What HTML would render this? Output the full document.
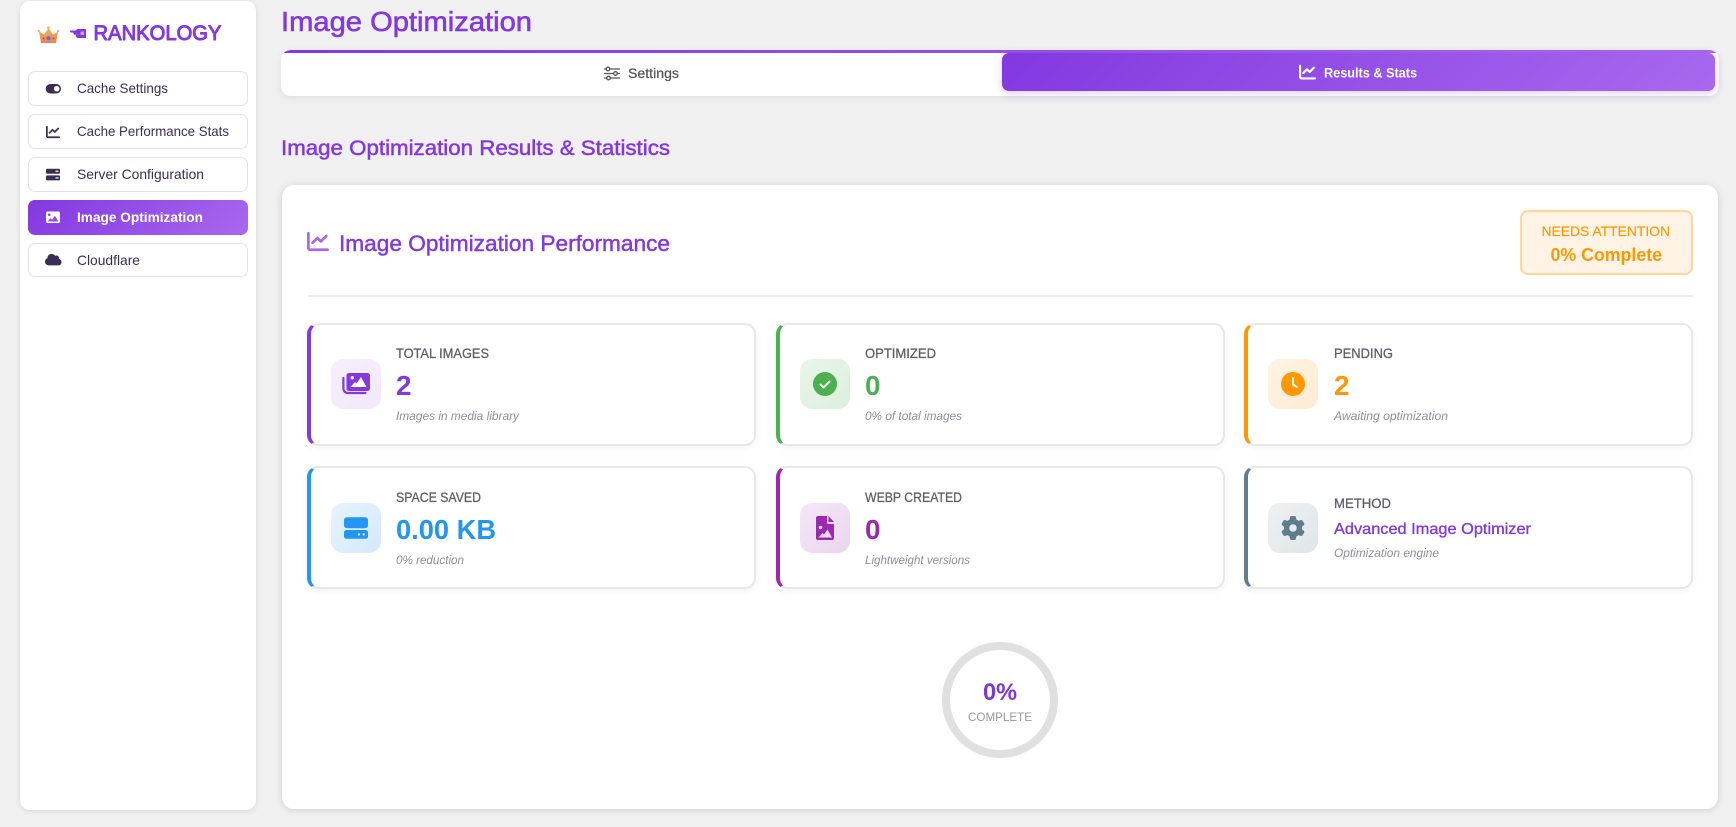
<!DOCTYPE html>
<html lang="en">
<head>
<meta charset="utf-8">
<title>Image Optimization</title>
<style>
html,body{margin:0;padding:0;width:1736px;height:827px;overflow:hidden;background:#f0f0f0;font-family:"Liberation Sans",sans-serif}
.box{position:absolute;box-sizing:border-box}
.side{left:20px;top:1px;width:236px;height:809px;background:#fff;border-radius:10px;box-shadow:0 1px 6px rgba(0,0,0,.1)}
.nav{left:28px;width:220px;background:#fff;border:1.5px solid #e2e2ea;border-radius:7px}
.nav.on{background:linear-gradient(135deg,#8338e0,#a868ee);border:0}
.tabs{left:281px;top:50px;width:1438px;height:46px;background:#fff;border-radius:10px;box-shadow:0 2px 8px rgba(0,0,0,.08);overflow:hidden}
.tabs:before{content:"";position:absolute;left:0;top:0;right:0;height:3px;background:linear-gradient(90deg,#8338e0,#a868ee)}
.tab{left:1002px;top:53px;width:713px;height:38px;background:linear-gradient(135deg,#8338e0,#a868ee);border-radius:7px;box-shadow:0 2px 8px rgba(131,56,224,.25)}
.main{left:282px;top:185px;width:1436px;height:624px;background:#fff;border-radius:12px;box-shadow:0 1px 8px rgba(0,0,0,.14)}
.rule{left:308px;top:295px;width:1385px;height:2px;background:#ececec}
.badge{left:1520px;top:210px;width:173px;height:65px;background:#fff3e6;border:2px solid #ffd699;border-radius:8px}
.card{width:449px;height:123px;background:#fff;border:2px solid #e8e8e8;border-left:4px solid;border-radius:11px;box-shadow:0 2px 8px rgba(0,0,0,.05)}
.ico{width:50px;height:50px;border-radius:12px}
.ring{left:942px;top:642px;width:116px;height:116px;border:8px solid #e0e0e0;border-radius:50%;background:#fff}
svg.layer{position:absolute;left:0;top:0}
text{font-family:"Liberation Sans",sans-serif}
.lab{font-size:13.5px;fill:#5f5f68;stroke:#5f5f68;stroke-width:.3}
.sub{font-size:12px;font-style:italic;fill:#8f8f96}
.val{font-size:28px;font-weight:bold}
.nv{font-size:14px;fill:#3a2e55}
</style>
</head>
<body>
<div class="box side"></div>
<div class="box nav" style="top:71px;height:35px"></div>
<div class="box nav" style="top:114px;height:35px"></div>
<div class="box nav" style="top:157px;height:35px"></div>
<div class="box nav on" style="top:200px;height:35px"></div>
<div class="box nav" style="top:243px;height:34px"></div>

<div class="box tabs"></div>
<div class="box tab"></div>

<div class="box main"></div>
<div class="box badge"></div>
<div class="box rule"></div>

<div class="box card" style="left:307px;top:323px;border-left-color:#8338e0"></div>
<div class="box card" style="left:776px;top:323px;border-left-color:#4caf50"></div>
<div class="box card" style="left:1244px;top:323px;border-left-color:#ff9800"></div>
<div class="box card" style="left:307px;top:466px;border-left-color:#2196f3"></div>
<div class="box card" style="left:776px;top:466px;border-left-color:#9c27b0"></div>
<div class="box card" style="left:1244px;top:466px;border-left-color:#607d8b"></div>

<div class="box ico" style="left:331px;top:359px;background:linear-gradient(135deg,#f5effd,#f1e9fc)"></div>
<div class="box ico" style="left:800px;top:359px;background:linear-gradient(135deg,#e9f5ea,#dcefdd)"></div>
<div class="box ico" style="left:1268px;top:359px;background:linear-gradient(135deg,#fff3e3,#ffebd2)"></div>
<div class="box ico" style="left:331px;top:503px;background:linear-gradient(135deg,#e6f3fe,#d5e9fc)"></div>
<div class="box ico" style="left:800px;top:503px;background:linear-gradient(135deg,#f4e7f7,#ebd5f0)"></div>
<div class="box ico" style="left:1268px;top:503px;background:linear-gradient(135deg,#eef1f3,#dfe5e8)"></div>

<div class="box ring"></div>

<svg class="layer" width="1736" height="827" viewBox="0 0 1736 827" xmlns="http://www.w3.org/2000/svg">
  <defs>
    <linearGradient id="cr" x1="0" y1="0" x2="0" y2="1"><stop offset="0" stop-color="#f4b45c"/><stop offset="1" stop-color="#ee7f5c"/></linearGradient>
  </defs>
  <!-- logo -->
  <path d="M39 31.500L44 34.500L48.500 28L53 34.500L58 31.500L56 43H41Z" fill="url(#cr)"/>
  <circle cx="48.500" cy="27.500" r="1.300" fill="#f0b050"/>
  <circle cx="38.800" cy="31" r="1.100" fill="#f0b050"/>
  <circle cx="58.200" cy="31" r="1.100" fill="#f0b050"/>
  <circle cx="48.500" cy="38.300" r="2" fill="#3f7fe0"/>
  <circle cx="43.500" cy="38.500" r="1" fill="#e0405a"/>
  <circle cx="53.500" cy="38.500" r="1" fill="#e0405a"/>
  <path d="M69.500 30.500h6l2-1.500h8.500v9h-9l-1.500-2.200 1-1h-2.500l-1-2.300h-2.500z" fill="#8338e0"/>
  <rect x="80.500" y="31.500" width="3.500" height="3.500" fill="#c9a6f3"/>
  <text x="93.500" y="40" font-size="21" fill="#8338e0" stroke="#8338e0" stroke-width="1" stroke-linejoin="round" textLength="128" lengthAdjust="spacingAndGlyphs">RANKOLOGY</text>

  <!-- nav icons -->
  <rect x="45.700" y="84" width="15.300" height="9.500" rx="4.750" fill="#3a2e55"/>
  <circle cx="56.700" cy="88.750" r="2.800" fill="#fff"/>
  <svg x="46" y="125" width="14" height="14" viewBox="0 0 512 512"><path fill="#3a2e55" d="M64 64c0-17.700-14.300-32-32-32S0 46.300 0 64V400c0 44.200 35.800 80 80 80H480c17.700 0 32-14.300 32-32s-14.300-32-32-32H80c-8.800 0-16-7.200-16-16V64zm406.600 86.600c12.500-12.500 12.500-32.800 0-45.300s-32.800-12.500-45.300 0L320 210.700l-57.400-57.400c-12.500-12.500-32.800-12.500-45.300 0l-112 112c-12.500 12.500-12.500 32.800 0 45.300s32.800 12.500 45.300 0L240 221.300l57.400 57.400c12.500 12.500 32.800 12.500 45.300 0l128-128z"/></svg>
  <rect x="46" y="168.700" width="14" height="5" rx="1.300" fill="#3a2e55"/>
  <rect x="46" y="175.400" width="14" height="5" rx="1.300" fill="#3a2e55"/>
  <rect x="55.500" y="170.600" width="3" height="1.200" fill="#fff"/>
  <rect x="55.500" y="177.300" width="3" height="1.200" fill="#fff"/>
  <rect x="46" y="211.500" width="14" height="11.500" rx="1.500" fill="#fff"/>
  <circle cx="49.300" cy="214.700" r="1.300" fill="#8f4ee4"/>
  <path d="M47.500 221.500l3-3.300 1.500 1.500 3-4 3.500 5.800z" fill="#8f4ee4"/>
  <svg x="45" y="253" width="16.500" height="13.200" viewBox="0 0 640 512"><path fill="#3a2e55" d="M0 336c0 79.500 64.500 144 144 144H512c70.700 0 128-57.300 128-128c0-61.900-43.900-113.500-102.400-125.400c4.100-10.700 6.400-22.400 6.400-34.600c0-53-43-96-96-96c-19.700 0-38.100 6-53.300 16.200C367 64.200 315.300 32 256 32C167.600 32 96 103.600 96 192c0 2.700 .1 5.400 .2 8.100C40.200 219.800 0 273.200 0 336z"/></svg>

  <!-- nav text -->
  <text class="nv" x="77" y="93" textLength="91" lengthAdjust="spacingAndGlyphs">Cache Settings</text>
  <text class="nv" x="77" y="136" textLength="152" lengthAdjust="spacingAndGlyphs">Cache Performance Stats</text>
  <text class="nv" x="77" y="179" textLength="127" lengthAdjust="spacingAndGlyphs">Server Configuration</text>
  <text x="77" y="222" font-size="14" font-weight="bold" fill="#fff" textLength="126" lengthAdjust="spacingAndGlyphs">Image Optimization</text>
  <text class="nv" x="77" y="265" textLength="63" lengthAdjust="spacingAndGlyphs">Cloudflare</text>

  <!-- headings -->
  <text x="281" y="31" font-size="28" fill="#8338e0" stroke="#8338e0" stroke-width=".6" textLength="251" lengthAdjust="spacingAndGlyphs">Image Optimization</text>
  <text x="281" y="155" font-size="21" fill="#8338e0" stroke="#8338e0" stroke-width=".5" textLength="389" lengthAdjust="spacingAndGlyphs">Image Optimization Results &amp; Statistics</text>
  <text x="339" y="251" font-size="22" fill="#8338e0" stroke="#8338e0" stroke-width=".45" textLength="331" lengthAdjust="spacingAndGlyphs">Image Optimization Performance</text>

  <!-- tabs -->
  <g stroke="#555" stroke-width="1.300" fill="none">
    <path d="M604 69h16M604 73.500h16M604 78h16"/>
    <circle cx="608" cy="69" r="1.800" fill="#fff"/>
    <circle cx="615.500" cy="73.500" r="1.800" fill="#fff"/>
    <circle cx="608.500" cy="78" r="1.800" fill="#fff"/>
  </g>
  <text x="628" y="78" font-size="14" fill="#555" stroke="#555" stroke-width=".25" textLength="51" lengthAdjust="spacingAndGlyphs">Settings</text>
  <svg x="1299" y="63.500" width="17" height="17" viewBox="0 0 512 512"><path fill="#fff" d="M64 64c0-17.700-14.300-32-32-32S0 46.300 0 64V400c0 44.200 35.800 80 80 80H480c17.700 0 32-14.300 32-32s-14.300-32-32-32H80c-8.800 0-16-7.200-16-16V64zm406.600 86.600c12.500-12.500 12.500-32.800 0-45.300s-32.800-12.500-45.300 0L320 210.700l-57.400-57.400c-12.500-12.500-32.800-12.500-45.300 0l-112 112c-12.500 12.500-12.500 32.800 0 45.300s32.800 12.500 45.300 0L240 221.300l57.400 57.400c12.500 12.500 32.800 12.500 45.300 0l128-128z"/></svg>
  <text x="1324" y="77.500" font-size="14" font-weight="bold" fill="#fff" textLength="93" lengthAdjust="spacingAndGlyphs">Results &amp; Stats</text>

  <!-- card header -->
  <svg x="307" y="230.500" width="22" height="22" viewBox="0 0 512 512"><path fill="#a868ee" d="M64 64c0-17.700-14.300-32-32-32S0 46.300 0 64V400c0 44.200 35.800 80 80 80H480c17.700 0 32-14.300 32-32s-14.300-32-32-32H80c-8.800 0-16-7.200-16-16V64zm406.600 86.600c12.500-12.500 12.500-32.800 0-45.300s-32.800-12.500-45.300 0L320 210.700l-57.400-57.400c-12.500-12.500-32.800-12.500-45.300 0l-112 112c-12.500 12.500-12.500 32.800 0 45.300s32.800 12.500 45.300 0L240 221.300l57.400 57.400c12.500 12.500 32.800 12.500 45.300 0l128-128z"/></svg>
  <text x="1541.500" y="236" font-size="14" fill="#ff9800" stroke="#ff9800" stroke-width=".15" textLength="128.500" lengthAdjust="spacingAndGlyphs">NEEDS ATTENTION</text>
  <text x="1550.500" y="261" font-size="18" font-weight="bold" fill="#ff9800" textLength="111.500" lengthAdjust="spacingAndGlyphs">0% Complete</text>

  <!-- stat icons -->
  <path d="M343.400 378v10.500a4.500 4.500 0 0 0 4.500 4.500h17.500" fill="none" stroke="#8338e0" stroke-width="2.200" stroke-linecap="round"/>
  <rect x="346.500" y="373" width="23.500" height="18" rx="2.500" fill="#8338e0"/>
  <circle cx="352.300" cy="377.700" r="1.700" fill="#fff"/>
  <path d="M350.500 387l4.500-5 1.500 1.500 4.500-6.500 5.500 10z" fill="#fff"/>

  <circle cx="825" cy="384" r="12" fill="#4caf50"/>
  <path d="M820.500 384.500l3 3 6-6" fill="none" stroke="#e8f5e9" stroke-width="2" stroke-linecap="round" stroke-linejoin="round"/>

  <circle cx="1293" cy="384" r="12" fill="#ff9800"/>
  <path d="M1293 378v6.500l3.800 2.600" fill="none" stroke="#fff" stroke-width="2" stroke-linecap="round" stroke-linejoin="round"/>

  <rect x="344" y="517.300" width="24" height="11" rx="3" fill="#2196f3"/>
  <rect x="344" y="530" width="24" height="8.800" rx="2.500" fill="#2196f3"/>
  <circle cx="359" cy="534.400" r="1.200" fill="#e3f2fd"/>
  <circle cx="363.700" cy="534.400" r="1.200" fill="#e3f2fd"/>

  <path d="M818 516h9v6.500a1.500 1.500 0 0 0 1.500 1.500h5.500v14a2 2 0 0 1-2 2h-14a2 2 0 0 1-2-2v-20a2 2 0 0 1 2-2z" fill="#9c27b0"/>
  <path d="M828.500 516l5.500 6h-5.500z" fill="#9c27b0"/>
  <circle cx="820.500" cy="527.500" r="1.800" fill="#f3e0f6"/>
  <path d="M818.500 537.500l4-4.500 1.500 1.500 3.500-5 4.500 8z" fill="#f3e0f6"/>

  <svg x="1281" y="516" width="24" height="24" viewBox="0 0 512 512"><path fill="#607d8b" d="M495.900 166.600c3.200 8.700 .5 18.400-6.400 24.600l-43.300 39.400c1.100 8.300 1.700 16.800 1.700 25.400s-.6 17.100-1.700 25.400l43.300 39.400c6.900 6.200 9.600 15.900 6.400 24.600c-4.400 11.900-9.700 23.300-15.800 34.300l-4.700 8.100c-6.600 11-14 21.400-22.100 31.200c-5.900 7.200-15.700 9.600-24.500 6.800l-55.700-17.700c-13.400 10.300-28.200 18.900-44 25.400l-12.500 57.100c-2 9.100-9 16.300-18.200 17.800c-13.800 2.300-28 3.500-42.500 3.500s-28.700-1.200-42.500-3.500c-9.200-1.500-16.200-8.700-18.200-17.800l-12.500-57.100c-15.800-6.500-30.600-15.100-44-25.400L83.100 425.900c-8.800 2.800-18.600 .3-24.500-6.800c-8.100-9.800-15.500-20.200-22.100-31.200l-4.700-8.100c-6.100-11-11.400-22.400-15.800-34.300c-3.200-8.700-.5-18.400 6.400-24.600l43.300-39.400C64.600 273.100 64 264.600 64 256s.6-17.100 1.700-25.400L22.400 191.200c-6.900-6.200-9.600-15.900-6.400-24.600c4.400-11.900 9.700-23.300 15.800-34.300l4.700-8.100c6.600-11 14-21.400 22.100-31.200c5.900-7.200 15.700-9.600 24.500-6.800l55.700 17.700c13.400-10.300 28.200-18.900 44-25.400l12.500-57.100c2-9.100 9-16.300 18.200-17.800C227.300 1.200 241.500 0 256 0s28.700 1.200 42.500 3.500c9.200 1.500 16.200 8.700 18.200 17.800l12.500 57.100c15.800 6.500 30.600 15.100 44 25.400l55.700-17.700c8.800-2.800 18.600-.3 24.500 6.800c8.100 9.800 15.500 20.200 22.100 31.200l4.700 8.100c6.100 11 11.400 22.400 15.800 34.300zM256 336a80 80 0 1 0 0-160 80 80 0 1 0 0 160z"/></svg>

  <!-- row 1 -->
  <text class="lab" x="396" y="358" textLength="93" lengthAdjust="spacingAndGlyphs">TOTAL IMAGES</text>
  <text class="val" x="396" y="395" fill="#8338e0" textLength="15.500" lengthAdjust="spacingAndGlyphs">2</text>
  <text class="sub" x="396" y="420" textLength="123" lengthAdjust="spacingAndGlyphs">Images in media library</text>

  <text class="lab" x="865" y="358" textLength="71" lengthAdjust="spacingAndGlyphs">OPTIMIZED</text>
  <text class="val" x="865" y="395" fill="#4caf50" textLength="15.500" lengthAdjust="spacingAndGlyphs">0</text>
  <text class="sub" x="865" y="420" textLength="97" lengthAdjust="spacingAndGlyphs">0% of total images</text>

  <text class="lab" x="1334" y="358" textLength="59" lengthAdjust="spacingAndGlyphs">PENDING</text>
  <text class="val" x="1334" y="395" fill="#ff9800" textLength="15.500" lengthAdjust="spacingAndGlyphs">2</text>
  <text class="sub" x="1334" y="420" textLength="114" lengthAdjust="spacingAndGlyphs">Awaiting optimization</text>

  <!-- row 2 -->
  <text class="lab" x="396" y="502" textLength="85" lengthAdjust="spacingAndGlyphs">SPACE SAVED</text>
  <text class="val" x="396" y="539" fill="#2196f3" textLength="100" lengthAdjust="spacingAndGlyphs">0.00 KB</text>
  <text class="sub" x="396" y="564" textLength="68" lengthAdjust="spacingAndGlyphs">0% reduction</text>

  <text class="lab" x="865" y="502" textLength="97" lengthAdjust="spacingAndGlyphs">WEBP CREATED</text>
  <text class="val" x="865" y="539" fill="#9c27b0" textLength="15.500" lengthAdjust="spacingAndGlyphs">0</text>
  <text class="sub" x="865" y="564" textLength="105" lengthAdjust="spacingAndGlyphs">Lightweight versions</text>

  <text class="lab" x="1334" y="508" textLength="57" lengthAdjust="spacingAndGlyphs">METHOD</text>
  <text x="1334" y="534" font-size="16" fill="#8338e0" stroke="#8338e0" stroke-width=".35" textLength="197" lengthAdjust="spacingAndGlyphs">Advanced Image Optimizer</text>
  <text class="sub" x="1334" y="557" textLength="105" lengthAdjust="spacingAndGlyphs">Optimization engine</text>

  <!-- progress -->
  <text x="983" y="700" font-size="24" font-weight="bold" fill="#7c35e0" textLength="34" lengthAdjust="spacingAndGlyphs">0%</text>
  <text x="968" y="721" font-size="12" fill="#999" textLength="64" lengthAdjust="spacingAndGlyphs">COMPLETE</text>
</svg>
</body>
</html>
